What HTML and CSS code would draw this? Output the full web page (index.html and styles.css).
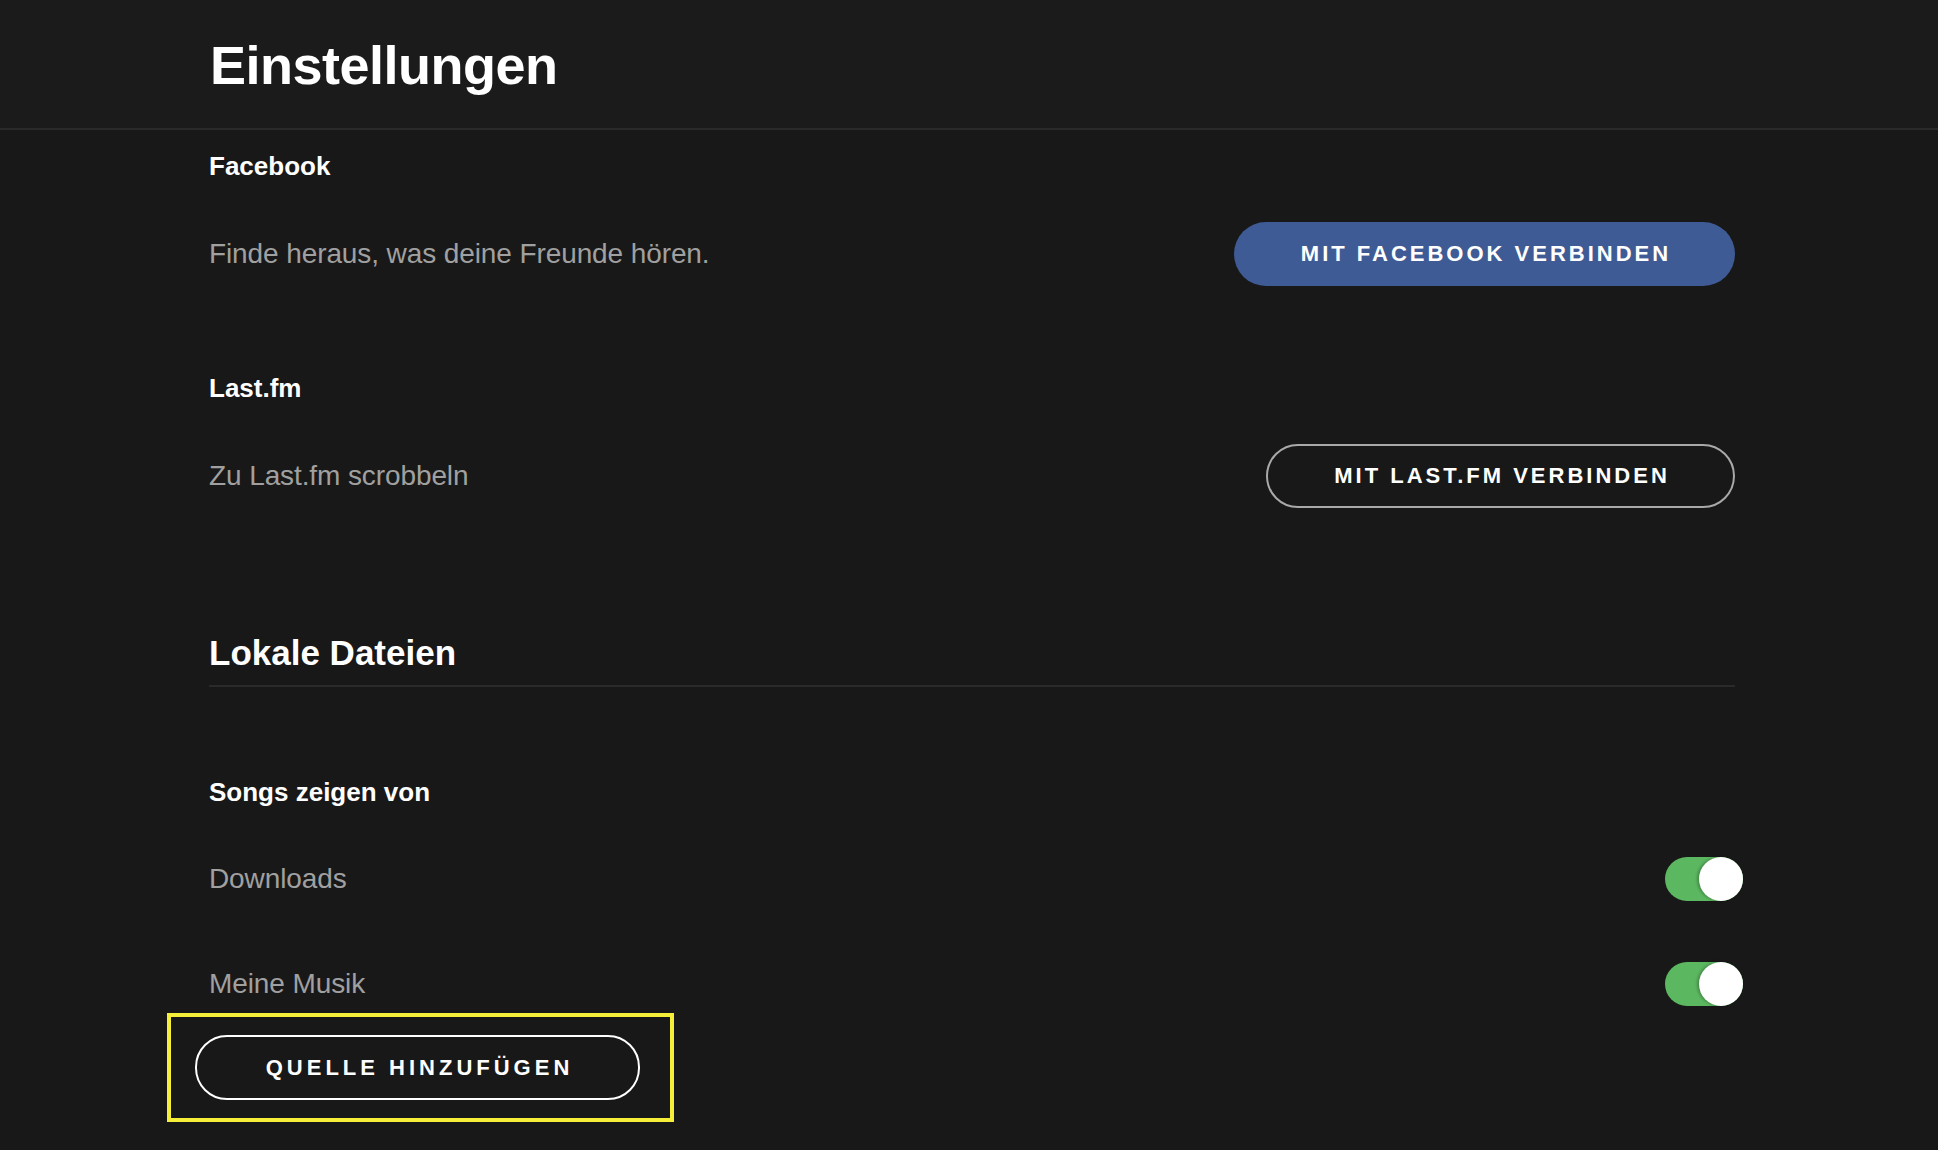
FILE: index.html
```html
<!DOCTYPE html>
<html lang="de">
<head>
<meta charset="utf-8">
<title>Einstellungen</title>
<link rel="stylesheet" href="styles.css">
</head>
<body>
<header class="topbar">
  <h1 class="title">Einstellungen</h1>
</header>
<main class="content">
  <section class="group">
    <h3 class="label">Facebook</h3>
    <div class="row row-first">
      <span class="desc">Finde heraus, was deine Freunde hören.</span>
      <button class="btn btn-fb">MIT FACEBOOK VERBINDEN</button>
    </div>
  </section>
  <section class="group group-gap">
    <h3 class="label">Last.fm</h3>
    <div class="row row-first">
      <span class="desc">Zu Last.fm scrobbeln</span>
      <button class="btn btn-outline">MIT LAST.FM VERBINDEN</button>
    </div>
  </section>
  <section class="section">
    <h2 class="section-title">Lokale Dateien</h2>
    <h3 class="label label-songs">Songs zeigen von</h3>
    <div class="row toggle-row toggle-row-first">
      <span class="desc">Downloads</span>
      <span class="toggle" role="switch" aria-checked="true"><span class="knob"></span></span>
    </div>
    <div class="row toggle-row toggle-row-second">
      <span class="desc">Meine Musik</span>
      <span class="toggle" role="switch" aria-checked="true"><span class="knob"></span></span>
    </div>
    <div class="highlight">
      <button class="btn btn-white">QUELLE HINZUFÜGEN</button>
    </div>
  </section>
</main>
</body>
</html>
```

FILE: styles.css
```css
* { box-sizing: border-box; }
html, body {
  margin: 0;
  padding: 0;
  background: #181818;
  font-family: "Liberation Sans", Arial, sans-serif;
  color: #fff;
}
body { height: 1150px; overflow: hidden; }

.topbar {
  height: 130px;
  padding: 33px 0 0 210px;
  background: #1b1b1b;
  border-bottom: 2px solid #2a2a2a;
}
.title {
  margin: 0;
  font-size: 54px;
  line-height: 64px;
  font-weight: 700;
  letter-spacing: -0.5px;
}

.content {
  padding: 0 203px 0 209px;
}

.label {
  margin: 18px 0 0;
  font-size: 26px;
  line-height: 36px;
  font-weight: 700;
}
.group-gap .label { margin-top: 84px; }

.row {
  display: flex;
  align-items: center;
  justify-content: space-between;
}
.row-first { margin-top: 38px; height: 64px; }

.desc {
  font-size: 28px;
  line-height: 36px;
  color: #a0a0a0;
  letter-spacing: -0.1px;
}

.btn {
  font-family: "Liberation Sans", Arial, sans-serif;
  font-weight: 700;
  font-size: 22px;
  letter-spacing: 3px;
  height: 64px;
  border-radius: 32px;
  color: #fff;
  background: transparent;
  cursor: pointer;
  padding: 0 0 0 3px;
}
.btn-fb {
  background: #3f5b95;
  border: 0;
  width: 501px;
}
.btn-outline {
  border: 2px solid #a9a9a9;
  width: 469px;
}
.btn-white {
  border: 2px solid #fff;
  width: 445px;
  height: 65px;
  letter-spacing: 4px;
  padding: 0 0 0 4px;
}

.section-title {
  margin: 123px 0 0;
  font-size: 35px;
  line-height: 44px;
  font-weight: 700;
  padding-bottom: 10px;
  border-bottom: 2px solid #2a2a2a;
}
.label-songs { margin-top: 87px; }

.toggle-row { height: 44px; }
.toggle-row-first { margin-top: 47px; }
.toggle-row-second { margin-top: 61px; }

.toggle {
  position: relative;
  display: block;
  width: 78px;
  height: 44px;
  border-radius: 22px;
  background: #5cb860;
  margin-right: -8px;
}
.knob {
  position: absolute;
  right: 0;
  top: 0;
  width: 44px;
  height: 44px;
  border-radius: 50%;
  background: #fff;
  box-shadow: -2px 0 3px rgba(0, 0, 0, 0.25);
}

.highlight {
  display: flex;
  width: 507px;
  height: 109px;
  margin: 7px 0 0 -42px;
  padding: 18px 0 0 24px;
  border: 4px solid #f6ef3a;
}
```
